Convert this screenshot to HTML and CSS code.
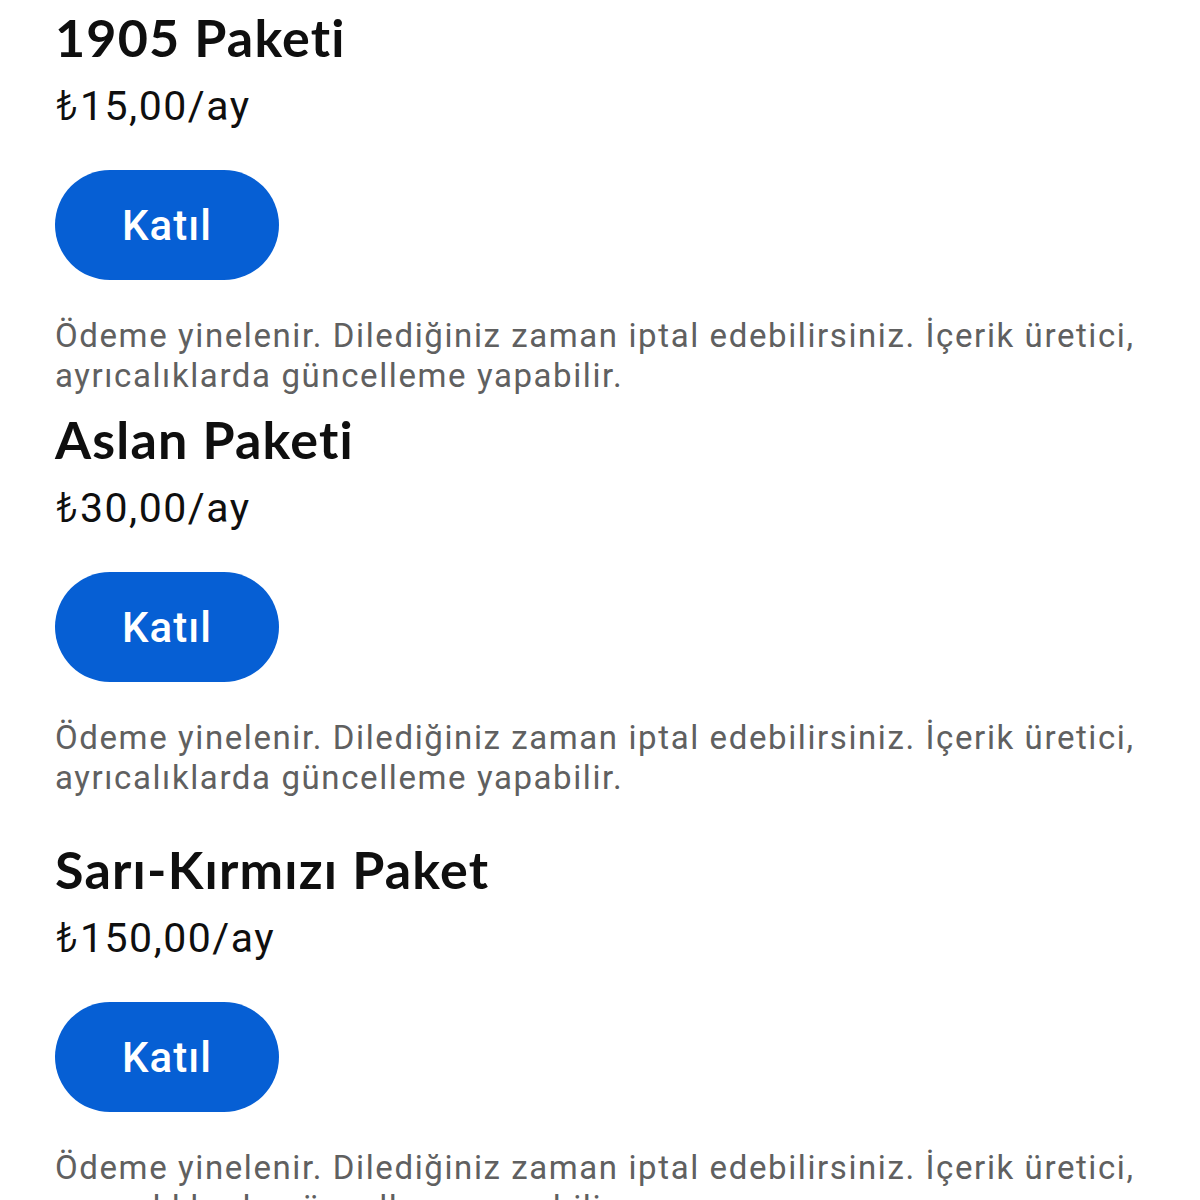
FILE: index.html
```html
<!DOCTYPE html>
<html lang="tr">
<head>
  <meta charset="UTF-8">
  <title>Kanal Üyelikleri</title>
  <meta name="viewport" content="width=device-width, initial-scale=1.0">
  <link rel="stylesheet" href="styles.css">
</head>
<body>
  <main class="tiers">
    <section class="tier">
      <h2 class="tier-name">1905 Paketi</h2>
      <p class="tier-price"><span class="currency">₺</span>15,00/ay</p>
      <button class="join-btn">Katıl</button>
      <p class="tier-note">Ödeme yinelenir. Dilediğiniz zaman iptal edebilirsiniz. İçerik üretici, ayrıcalıklarda güncelleme yapabilir.</p>
    </section>

    <section class="tier">
      <h2 class="tier-name">Aslan Paketi</h2>
      <p class="tier-price"><span class="currency">₺</span>30,00/ay</p>
      <button class="join-btn">Katıl</button>
      <p class="tier-note">Ödeme yinelenir. Dilediğiniz zaman iptal edebilirsiniz. İçerik üretici, ayrıcalıklarda güncelleme yapabilir.</p>
    </section>

    <section class="tier tier-spaced">
      <h2 class="tier-name">Sarı-Kırmızı Paket</h2>
      <p class="tier-price"><span class="currency">₺</span>150,00/ay</p>
      <button class="join-btn">Katıl</button>
      <p class="tier-note">Ödeme yinelenir. Dilediğiniz zaman iptal edebilirsiniz. İçerik üretici, ayrıcalıklarda güncelleme yapabilir.</p>
    </section>
  </main>
</body>
</html>
```

FILE: styles.css
```css
body {
  margin: 0;
  background: #fff;
  font-family: Roboto, 'Noto Sans', sans-serif;
  color: #0f0f0f;
}
.tiers {
  padding: 7px 20px 0 55px;
}
.tier + .tier {
  margin-top: 15px;
}
.tier.tier-spaced {
  margin-top: 43px;
}
.tier-name {
  margin: 0;
  font-family: Lato, 'Noto Sans', sans-serif;
  font-weight: 700;
  font-size: 52px;
  line-height: 60px;
  letter-spacing: 1.2px;
}
.tier-price {
  margin: 15px 0 0;
  font-size: 41px;
  line-height: 48px;
  letter-spacing: 1.5px;
}
/* lira sign: lighter cut so it matches the digits */
.currency {
  font-family: Inter, 'Noto Sans', sans-serif;
  font-weight: 300;
  line-height: 1;
}
.join-btn {
  display: block;
  margin-top: 40px;
  height: 110px;
  width: 224px;
  padding: 0;
  border: none;
  border-radius: 55px;
  background: #065fd4;
  color: #fff;
  font-family: Roboto, sans-serif;
  font-weight: 500;
  font-size: 42px;
  letter-spacing: 1px;
  cursor: pointer;
}
.tier-note {
  margin: 36px 0 0;
  font-size: 33px;
  line-height: 40px;
  letter-spacing: 1.6px;
  color: #606060;
  max-height: 78px;
  overflow: hidden;
}
```
